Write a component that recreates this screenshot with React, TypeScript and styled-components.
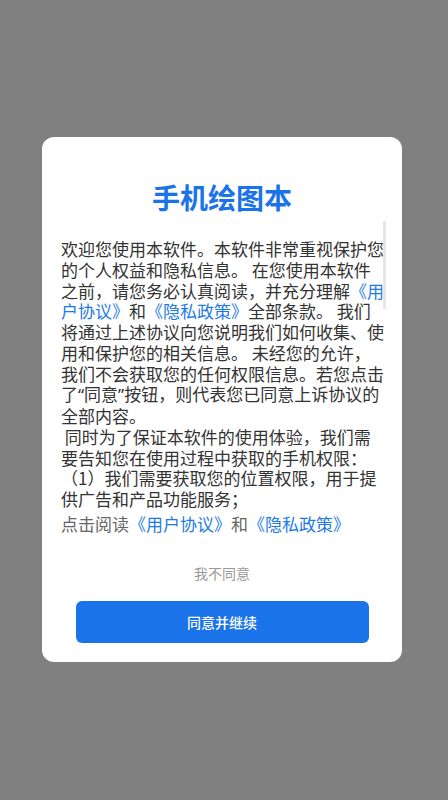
import React from 'react'
import styled, { createGlobalStyle } from 'styled-components'

const GlobalStyle = createGlobalStyle`
  html, body {
    margin: 0;
    padding: 0;
    background: #808080;
    font-family: "Noto Sans CJK SC", "Noto Sans", sans-serif;
  }
`

const Screen = styled.div`
  width: 448px;
  height: 800px;
  background: #808080;
  display: flex;
  justify-content: center;
  padding-top: 137px;
  box-sizing: border-box;
`

const Dialog = styled.div`
  width: 360px;
  height: 525px;
  margin-left: -4px;
  background: #fff;
  border-radius: 12px;
  display: flex;
  flex-direction: column;
  align-items: center;
  box-sizing: border-box;
`

const Title = styled.h1`
  margin: 40px 0 0;
  font-size: 28px;
  line-height: 40px;
  font-weight: 700;
  color: #1a73e8;
`

const Scroller = styled.div`
  position: relative;
  align-self: stretch;
  margin: 4px 16px 0 19px;
  padding-top: 18px;
`

const ScrollThumb = styled.div`
  position: absolute;
  top: 0;
  right: 0;
  width: 3px;
  height: 88px;
  background: #e6e6e6;
`

const Body = styled.div`
  font-size: 17px;
  line-height: 20.75px;
  color: #333;
  white-space: pre-wrap;
`

const Link = styled.span`
  color: #1e7ae6;
`

const Quote = styled.span`
  font-family: "Noto Sans", sans-serif;
`

const Note = styled.div`
  margin-top: 4px;
  font-size: 17px;
  line-height: 20.75px;
  color: #666;
`

const Decline = styled.button`
  margin-top: 28px;
  border: none;
  background: none;
  padding: 0;
  font-family: inherit;
  font-size: 14px;
  line-height: 20px;
  color: #999;
`

const Accept = styled.button`
  margin-top: 18px;
  width: 293px;
  height: 42px;
  border: none;
  border-radius: 6px;
  background: #1a73e8;
  color: #fff;
  font-family: inherit;
  font-size: 14px;
  font-weight: 500;
`

export default function App() {
  return (
    <>
      <GlobalStyle />
      <Screen>
        <Dialog>
          <Title>手机绘图本</Title>
          <Scroller>
            <ScrollThumb />
            <Body>
              {'欢迎您使用本软件。本软件非常重视保护您\n的个人权益和隐私信息。 在您使用本软件\n之前，请您务必认真阅读，并充分理解'}
              <Link>《用{'\n'}户协议》</Link>和<Link>《隐私政策》</Link>
              {'全部条款。 我们\n将通过上述协议向您说明我们如何收集、使\n用和保护您的相关信息。 未经您的允许，\n我们不会获取您的任何权限信息。若您点击\n了'}
              <Quote>“</Quote>同意<Quote>”</Quote>
              {'按钮，则代表您已同意上诉协议的\n全部内容。\n 同时为了保证本软件的使用体验，我们需\n要告知您在使用过程中获取的手机权限：\n（1）我们需要获取您的位置权限，用于提\n供广告和产品功能服务；'}
            </Body>
            <Note>
              点击阅读<Link>《用户协议》</Link>和<Link>《隐私政策》</Link>
            </Note>
          </Scroller>
          <Decline>我不同意</Decline>
          <Accept>同意并继续</Accept>
        </Dialog>
      </Screen>
    </>
  )
}
